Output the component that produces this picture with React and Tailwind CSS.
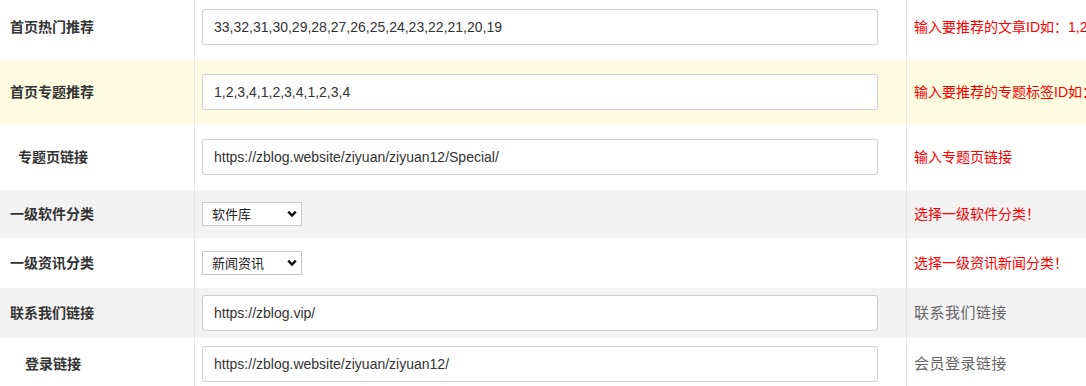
import { useState } from "react";

const rows = [
  {
    label: "首页热门推荐",
    indent: "pl-[10px]",
    type: "input",
    value: "33,32,31,30,29,28,27,26,25,24,23,22,21,20,19",
    tip: "输入要推荐的文章ID如：1,2,3,4",
    red: true,
    bg: "bg-white",
    h: "h-[66px]",
  },
  {
    label: "首页专题推荐",
    indent: "pl-[10px]",
    type: "input",
    value: "1,2,3,4,1,2,3,4,1,2,3,4",
    tip: "输入要推荐的专题标签ID如：1,2,3,4",
    red: true,
    bg: "bg-[#fefde1]",
    h: "h-[64px]",
  },
  {
    label: "专题页链接",
    indent: "pl-[18px]",
    type: "input",
    value: "https://zblog.website/ziyuan/ziyuan12/Special/",
    tip: "输入专题页链接",
    red: true,
    bg: "bg-white",
    h: "h-[66px]",
  },
  {
    label: "一级软件分类",
    indent: "pl-[10px]",
    type: "select",
    value: "软件库",
    options: ["软件库", "新闻资讯"],
    tip: "选择一级软件分类！",
    red: true,
    bg: "bg-[#f3f3f3]",
    h: "h-[48px]",
  },
  {
    label: "一级资讯分类",
    indent: "pl-[10px]",
    type: "select",
    value: "新闻资讯",
    options: ["新闻资讯", "软件库"],
    tip: "选择一级资讯新闻分类！",
    red: true,
    bg: "bg-white",
    h: "h-[50px]",
  },
  {
    label: "联系我们链接",
    indent: "pl-[10px]",
    type: "input",
    value: "https://zblog.vip/",
    tip: "联系我们链接",
    red: false,
    bg: "bg-[#f3f3f3]",
    h: "h-[50px]",
  },
  {
    label: "登录链接",
    indent: "pl-[25px]",
    type: "input",
    value: "https://zblog.website/ziyuan/ziyuan12/",
    tip: "会员登录链接",
    red: false,
    bg: "bg-white",
    h: "h-[52px]",
  },
];

function Chevron() {
  return (
    <svg
      className="pointer-events-none absolute right-[5px] top-1/2 -translate-y-1/2"
      width="10"
      height="7"
      viewBox="0 0 10 7"
    >
      <path d="M1.2 1.2 L5 5 L8.8 1.2" fill="none" stroke="#111" strokeWidth="2.4" />
    </svg>
  );
}

function Field({ row }) {
  const [val, setVal] = useState(row.value);
  if (row.type === "select") {
    return (
      <div className="relative w-[100px]">
        <select
          value={val}
          onChange={(e) => setVal(e.target.value)}
          className="h-[24px] w-[100px] appearance-none border border-[#c8c8c8] bg-white pl-[9px] text-[13px] text-[#222] outline-none"
        >
          {row.options.map((o) => (
            <option key={o}>{o}</option>
          ))}
        </select>
        <Chevron />
      </div>
    );
  }
  return (
    <input
      value={val}
      onChange={(e) => setVal(e.target.value)}
      className="h-[36px] w-[676px] rounded-[3px] border border-[#cfcfcf] bg-white px-[11px] text-[14px] text-[#333] outline-none"
      style={{ fontFamily: '"Liberation Sans", Arial, sans-serif' }}
    />
  );
}

export default function App() {
  return (
    <div
      className="w-full overflow-hidden bg-white"
      style={{ fontFamily: '"Liberation Sans", "Noto Sans CJK SC", sans-serif' }}
    >
      <div className="-mt-[6px]">
        {rows.map((row) => (
          <div key={row.label} className={`flex ${row.h} ${row.bg}`}>
            <div
              className={`flex w-[195px] shrink-0 items-center border-r border-[#e6e6e6] ${row.indent} text-[14px] font-bold text-[#333]`}
            >
              {row.label}
            </div>
            <div className="flex w-[712px] shrink-0 items-center border-r border-[#e6e6e6] pl-[7px]">
              <Field row={row} />
            </div>
            <div
              className={`flex min-w-0 flex-1 items-center overflow-hidden whitespace-nowrap pl-[7px] ${
                row.red ? "text-[14px] text-[#f00]" : "text-[15px] tracking-[0.5px] text-[#666]"
              }`}
            >
              {row.tip}
            </div>
          </div>
        ))}
      </div>
    </div>
  );
}
